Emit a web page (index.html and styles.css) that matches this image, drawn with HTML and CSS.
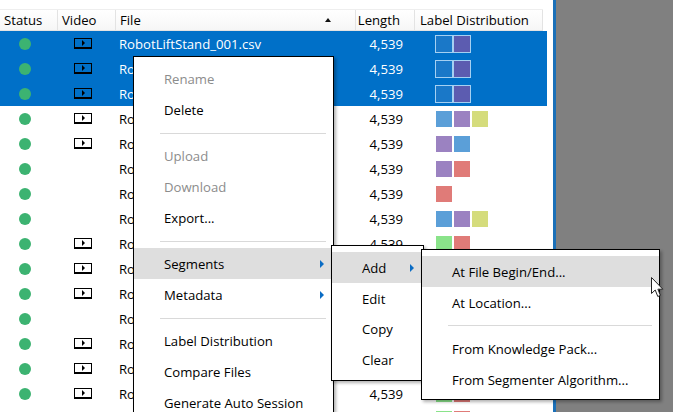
FILE: index.html
```html
<!DOCTYPE html>
<html lang="en">
<head>
	<title>Project files</title>
	<link rel="stylesheet" href="styles.css">
</head>

<body>
	<div class="app">
		<div class="files">
			<div class="table-head">
				<div class="th th-status">Status</div>
				<div class="th th-video">Video</div>
				<div class="th th-file">File <span class="sort"></span></div>
				<div class="th th-length">Length</div>
				<div class="th th-labels">Label Distribution</div>
			</div>

			<div class="row selected">
				<div class="status"><span class="dot"></span></div>
				<div class="video"><span class="film"></span></div>
				<div class="file">RobotLiftStand_001.csv</div>
				<div class="length">4,539</div>
				<div class="labels"><i class="blue"></i><i class="purple"></i></div>
			</div>
			<div class="row selected">
				<div class="status"><span class="dot"></span></div>
				<div class="video"><span class="film"></span></div>
				<div class="file">RobotLiftStand_002.csv</div>
				<div class="length">4,539</div>
				<div class="labels"><i class="blue"></i><i class="purple"></i></div>
			</div>
			<div class="row selected">
				<div class="status"><span class="dot"></span></div>
				<div class="video"><span class="film"></span></div>
				<div class="file">RobotLiftStand_003.csv</div>
				<div class="length">4,539</div>
				<div class="labels"><i class="blue"></i><i class="purple"></i></div>
			</div>
			<div class="row">
				<div class="status"><span class="dot"></span></div>
				<div class="video"><span class="film"></span></div>
				<div class="file">RobotLiftStand_004.csv</div>
				<div class="length">4,539</div>
				<div class="labels"><i class="blue"></i><i class="purple"></i><i class="yellow"></i></div>
			</div>
			<div class="row">
				<div class="status"><span class="dot"></span></div>
				<div class="video"><span class="film"></span></div>
				<div class="file">RobotLiftStand_005.csv</div>
				<div class="length">4,539</div>
				<div class="labels"><i class="purple"></i><i class="blue"></i></div>
			</div>
			<div class="row">
				<div class="status"><span class="dot"></span></div>
				<div class="video"></div>
				<div class="file">RobotLiftStand_006.csv</div>
				<div class="length">4,539</div>
				<div class="labels"><i class="purple"></i><i class="red"></i></div>
			</div>
			<div class="row">
				<div class="status"><span class="dot"></span></div>
				<div class="video"></div>
				<div class="file">RobotLiftStand_007.csv</div>
				<div class="length">4,539</div>
				<div class="labels"><i class="red"></i></div>
			</div>
			<div class="row">
				<div class="status"><span class="dot"></span></div>
				<div class="video"></div>
				<div class="file">RobotLiftStand_008.csv</div>
				<div class="length">4,539</div>
				<div class="labels"><i class="blue"></i><i class="purple"></i><i class="yellow"></i></div>
			</div>
			<div class="row">
				<div class="status"><span class="dot"></span></div>
				<div class="video"><span class="film"></span></div>
				<div class="file">RobotLiftStand_009.csv</div>
				<div class="length">4,539</div>
				<div class="labels"><i class="green"></i><i class="red"></i></div>
			</div>
			<div class="row">
				<div class="status"><span class="dot"></span></div>
				<div class="video"><span class="film"></span></div>
				<div class="file">RobotLiftStand_010.csv</div>
				<div class="length">4,539</div>
				<div class="labels"><i class="green"></i><i class="red"></i></div>
			</div>
			<div class="row">
				<div class="status"><span class="dot"></span></div>
				<div class="video"><span class="film"></span></div>
				<div class="file">RobotLiftStand_011.csv</div>
				<div class="length">4,539</div>
				<div class="labels"><i class="green"></i><i class="red"></i></div>
			</div>
			<div class="row">
				<div class="status"><span class="dot"></span></div>
				<div class="video"></div>
				<div class="file">RobotLiftStand_012.csv</div>
				<div class="length">4,539</div>
				<div class="labels"><i class="green"></i><i class="red"></i></div>
			</div>
			<div class="row">
				<div class="status"><span class="dot"></span></div>
				<div class="video"><span class="film"></span></div>
				<div class="file">RobotLiftStand_013.csv</div>
				<div class="length">4,539</div>
				<div class="labels"><i class="green"></i><i class="red"></i></div>
			</div>
			<div class="row">
				<div class="status"><span class="dot"></span></div>
				<div class="video"><span class="film"></span></div>
				<div class="file">RobotLiftStand_014.csv</div>
				<div class="length">4,539</div>
				<div class="labels"><i class="green"></i><i class="red"></i></div>
			</div>
			<div class="row">
				<div class="status"><span class="dot"></span></div>
				<div class="video"><span class="film"></span></div>
				<div class="file">RobotLiftStand_015.csv</div>
				<div class="length">4,539</div>
				<div class="labels"><i class="green"></i><i class="red"></i></div>
			</div>
			<div class="row">
				<div class="status"><span class="dot"></span></div>
				<div class="video"><span class="film"></span></div>
				<div class="file">RobotLiftStand_016.csv</div>
				<div class="length">4,539</div>
				<div class="labels"><i class="green"></i><i class="red"></i></div>
			</div>
		</div>
		<div class="side"></div>
	</div>

	<div class="menu menu-main">
		<div class="item disabled">Rename</div>
		<div class="item">Delete</div>
		<div class="sep"></div>
		<div class="item disabled">Upload</div>
		<div class="item disabled">Download</div>
		<div class="item">Export...</div>
		<div class="sep sep-short"></div>
		<div class="item active has-sub">Segments</div>
		<div class="item has-sub">Metadata</div>
		<div class="sep sep-tall"></div>
		<div class="item">Label Distribution</div>
		<div class="item">Compare Files</div>
		<div class="item">Generate Auto Session</div>
	</div>

	<div class="menu menu-segments">
		<div class="item active has-sub">Add</div>
		<div class="item">Edit</div>
		<div class="item raised">Copy</div>
		<div class="item raised">Clear</div>
	</div>

	<div class="menu menu-add">
		<div class="item active">At File Begin/End...</div>
		<div class="item">At Location...</div>
		<div class="sep"></div>
		<div class="item">From Knowledge Pack...</div>
		<div class="item">From Segmenter Algorithm...</div>
	</div>

	<svg class="cursor" width="13" height="21" viewBox="0 0 13 21">
		<path d="M0.5 0.5 L0.5 16.5 L4.2 13 L6.8 19.5 L9.4 18.4 L6.9 12.2 L11.8 12.2 Z" fill="#fff" stroke="#222" stroke-width="1"/>
	</svg>
</body>

</html>
```

FILE: styles.css
```css
* {
	box-sizing: border-box;
}

html, body {
	height: 100%;
}

body {
	margin: 0;
	overflow: hidden;
	background: #fff;
	color: #000;
	font-family: "Open Sans", sans-serif;
	font-size: 13.15px;
}

.app {
	display: flex;
	height: 412px;
	overflow: hidden;
}

.files {
	width: 553px;
	flex: none;
	padding-top: 9px;
	background: #fff;
}

.side {
	flex: 1;
	background: #808080;
	border-left: 3px solid #1b70b8;
}

/* table */
.table-head {
	display: grid;
	grid-template-columns: 58px 58px 240px 59px 128px;
	width: 543px;
	height: 22px;
	border-top: 1px solid #eee;
	border-bottom: 1px solid #e3e3e3;
	background: linear-gradient(#fff, #f6f6f6);
}

.th {
	display: flex;
	align-items: center;
	padding-left: 4px;
	border-right: 1px solid #e3e3e3;
}

.th-file {
	justify-content: space-between;
	padding-right: 24px;
}

.th-length {
	justify-content: flex-end;
	padding-right: 14px;
}

.th-labels {
	padding-left: 5px;
}

.sort {
	width: 0;
	height: 0;
	border-left: 3px solid transparent;
	border-right: 3px solid transparent;
	border-bottom: 4px solid #111;
}

.row {
	display: grid;
	grid-template-columns: 58px 58px 240px 59px 132px;
	align-items: center;
	width: 547px;
	height: 25px;
}

.row.selected {
	background: #0070c8;
	color: #fff;
}

.status, .video {
	display: flex;
	justify-content: center;
}

.status {
	padding-right: 8px;
}

.video {
	padding-right: 8px;
}

.dot {
	width: 12px;
	height: 12px;
	border-radius: 50%;
	background: #3cb371;
}

.film {
	display: block;
	position: relative;
	width: 18px;
	height: 11px;
	border: 1px solid #000;
	border-bottom-width: 2px;
}

.film::after {
	content: "";
	position: absolute;
	left: 7px;
	top: 1px;
	border-left: 3px solid #000;
	border-top: 3px solid transparent;
	border-bottom: 3px solid transparent;
}

.file {
	padding-left: 3px;
	white-space: nowrap;
}

.length {
	text-align: right;
	padding-right: 12px;
}

.labels {
	display: flex;
	gap: 2px;
	padding-left: 21px;
}

.labels i {
	display: block;
	width: 16px;
	height: 16px;
}

.blue { background: #5b9fd8; }
.purple { background: #9b82c1; }
.yellow { background: #d5dc7c; }
.red { background: #e07b78; }
.green { background: #8ae38a; }

.selected .labels {
	gap: 0;
	padding-left: 20px;
}

.selected .labels i {
	width: 18px;
	height: 18px;
	border: 1px solid #a5d0f2;
}

.selected .blue { background: #1a78c8; }
.selected .purple { background: #5c5cb0; }

/* context menus */
.menu {
	position: absolute;
	border: 1px solid #000;
	background: #fff;
	padding: 6px 0 4px;
	box-shadow: 2px 2px 3px rgba(0, 0, 0, 0.3);
}

.menu-main {
	left: 133px;
	top: 56px;
	width: 201px;
	padding-top: 7px;
	height: 380px;
}

.menu-segments {
	left: 331px;
	top: 245px;
	width: 93px;
}

.menu-add {
	left: 421px;
	top: 249px;
	width: 239px;
}

.item {
	position: relative;
	display: flex;
	align-items: center;
	height: 31px;
	padding-left: 30px;
	white-space: nowrap;
}

.menu-main .item, .item.raised {
	padding-bottom: 2px;
}

.menu-main .has-sub {
	padding-bottom: 0;
}

.item.disabled {
	color: #8c8c8c;
}

.item.active {
	background: #dedede;
}

.has-sub::after {
	content: "";
	position: absolute;
	right: 9px;
	top: 12px;
	border-left: 4px solid #0a6cc4;
	border-top: 4px solid transparent;
	border-bottom: 4px solid transparent;
}

.sep {
	display: flex;
	align-items: center;
	height: 15px;
	padding: 0 7px 0 26px;
}

.sep::before {
	content: "";
	flex: 1;
	height: 1px;
	background: #d9d9d9;
}

.sep-short {
	height: 14px;
}

.sep-tall {
	height: 16px;
}

.cursor {
	position: absolute;
	left: 651px;
	top: 277px;
}
```
